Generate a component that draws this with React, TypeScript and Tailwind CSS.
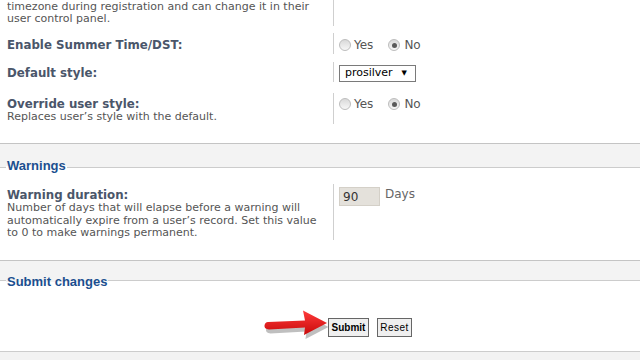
import React from "react";

const sans = "font-['DejaVu_Sans',Verdana,sans-serif]";
const label = "text-[11.8px] font-bold leading-[14px] text-[#4a566a] whitespace-nowrap";
const explain = "text-[11px] text-[#555] whitespace-nowrap";

function Radio({ checked }: { checked?: boolean }) {
  return (
    <span className="flex h-[12px] w-[12px] items-center justify-center rounded-full border border-[#bdbdbd] bg-[linear-gradient(#d9d9d9,#f7f7f7)]">
      {checked && <span className="h-[5px] w-[5px] rounded-full bg-[#5a5a5a]" />}
    </span>
  );
}

function YesNo({ value }: { value: boolean }) {
  return (
    <div className="flex items-center text-[12px] leading-[12px] text-[#555]">
      <Radio checked={value} />
      <span className="ml-[3px] mr-[15px]">Yes</span>
      <Radio checked={!value} />
      <span className="ml-[4px]">No</span>
    </div>
  );
}

function Band({ title, h, drop }: { title: string; h: string; drop: string }) {
  return (
    <div className={`border-t border-[#c4c4c4] bg-[#f3f3f3] ${h}`}>
      <div className="flex h-full items-end pl-[6px]">
        <span className={`${drop} bg-[linear-gradient(#f3f3f3_50%,#ffffff_50%)] px-[1px] font-['Liberation_Sans',Arial,sans-serif] text-[13px] font-bold leading-[14px] text-[#1b4f8f]`}>
          {title}
        </span>
      </div>
    </div>
  );
}

export default function App() {
  return (
    <div className={`h-[360px] w-[640px] overflow-hidden bg-white ${sans}`}>
      {/* timezone row (cut off at top) */}
      <div className="flex h-[26px]">
        <div className={`w-[333px] pl-[7px] pt-[1px] leading-[12px] ${explain}`}>
          timezone during registration and can change it in their
          <br />
          user control panel.
        </div>
        <div className="border-l border-[#cfcfcf]" />
      </div>

      <div className="mt-[7px] flex h-[21px]">
        <div className={`w-[333px] pl-[7px] pt-[5px] ${label}`}>Enable Summer Time/DST:</div>
        <div className="border-l border-[#cfcfcf] pl-[5px] pt-[6px]">
          <YesNo value={false} />
        </div>
      </div>

      <div className="mt-[8px] flex h-[20px]">
        <div className={`w-[333px] pl-[7px] pt-[4px] ${label}`}>Default style:</div>
        <div className="border-l border-[#cfcfcf] pl-[5px] pt-[3px]">
          <div className="flex h-[17px] w-[77px] items-center justify-between border border-[#7a7a7a] bg-white pl-[5px] pr-[8px] text-[11px] text-black">
            <span>prosilver</span>
            <span className="text-[7px]">▼</span>
          </div>
        </div>
      </div>

      <div className="mt-[11px] flex h-[31px]">
        <div className="w-[333px] pl-[7px] pt-[4px]">
          <div className={label}>Override user style:</div>
          <div className={`leading-[12px] ${explain}`}>Replaces user’s style with the default.</div>
        </div>
        <div className="border-l border-[#cfcfcf] pl-[5px] pt-[5px]">
          <YesNo value={false} />
        </div>
      </div>

      <div className="mt-[19px]">
        <Band title="Warnings" h="h-[24px]" drop="-mb-[6px]" />
        <div className="border-t border-[#cccccc] pt-[16px]">
          <div className="flex h-[56px]">
            <div className="w-[333px] pl-[7px] pt-[4px]">
              <div className={label}>Warning duration:</div>
              <div className={`leading-[12.5px] ${explain}`}>
                Number of days that will elapse before a warning will
                <br />
                automatically expire from a user’s record. Set this value
                <br />
                to 0 to make warnings permanent.
              </div>
            </div>
            <div className="flex items-start border-l border-[#cfcfcf] pl-[5px] pt-[3px]">
              <div className="flex h-[19px] w-[41px] items-end border border-[#d4d0c8] bg-[#e4e1db] pb-[1px] pl-[3px] text-[12px] leading-[14px] text-[#333]">
                90
              </div>
              <span className="ml-[5px] text-[12px] leading-[14px] text-[#666]">Days</span>
            </div>
          </div>
        </div>
      </div>

      <div className="mt-[20px]">
        <Band title="Submit changes" h="h-[20px]" drop="-mb-[9px]" />
        <div className="h-[71px] border-t border-[#cccccc] pt-[33px]">
          <div className="flex items-center pl-[263px]">
            <svg width="66" height="30" viewBox="0 0 66 30" className="-mt-[4px]">
              <defs>
                <linearGradient id="ar" x1="0" y1="0" x2="0" y2="1">
                  <stop offset="0" stopColor="#ff3b3b" />
                  <stop offset="1" stopColor="#c80a0a" />
                </linearGradient>
              </defs>
              <path
                d="M5 14 L42 12.5 L40 2.5 L64 15 L41 27 L42 19.5 L6 21.5 Q1 21 1.5 17.5 Q2 14.3 5 14 Z"
                fill="#000"
                opacity="0.25"
                transform="translate(1.5 2)"
              />
              <path
                d="M5 12 L42 10.5 L40 0.5 L64 13 L41 25 L42 17.5 L6 19.5 Q1 19 1.5 15.5 Q2 12.3 5 12 Z"
                fill="url(#ar)"
              />
            </svg>
            <button className="ml-[-1px] h-[19px] w-[41px] border border-[#666] bg-[#efefef] font-['Liberation_Sans',Arial,sans-serif] text-[10px] font-bold text-black">
              Submit
            </button>
            <button className="ml-[8px] h-[19px] w-[35px] border border-[#666] bg-[#efefef] font-['Liberation_Sans',Arial,sans-serif] text-[10px] tracking-[0.5px] text-black">
              Reset
            </button>
          </div>
        </div>
        <div className="h-[20px] border-t border-[#cccccc] bg-[#f2f2f2]" />
      </div>
    </div>
  );
}
